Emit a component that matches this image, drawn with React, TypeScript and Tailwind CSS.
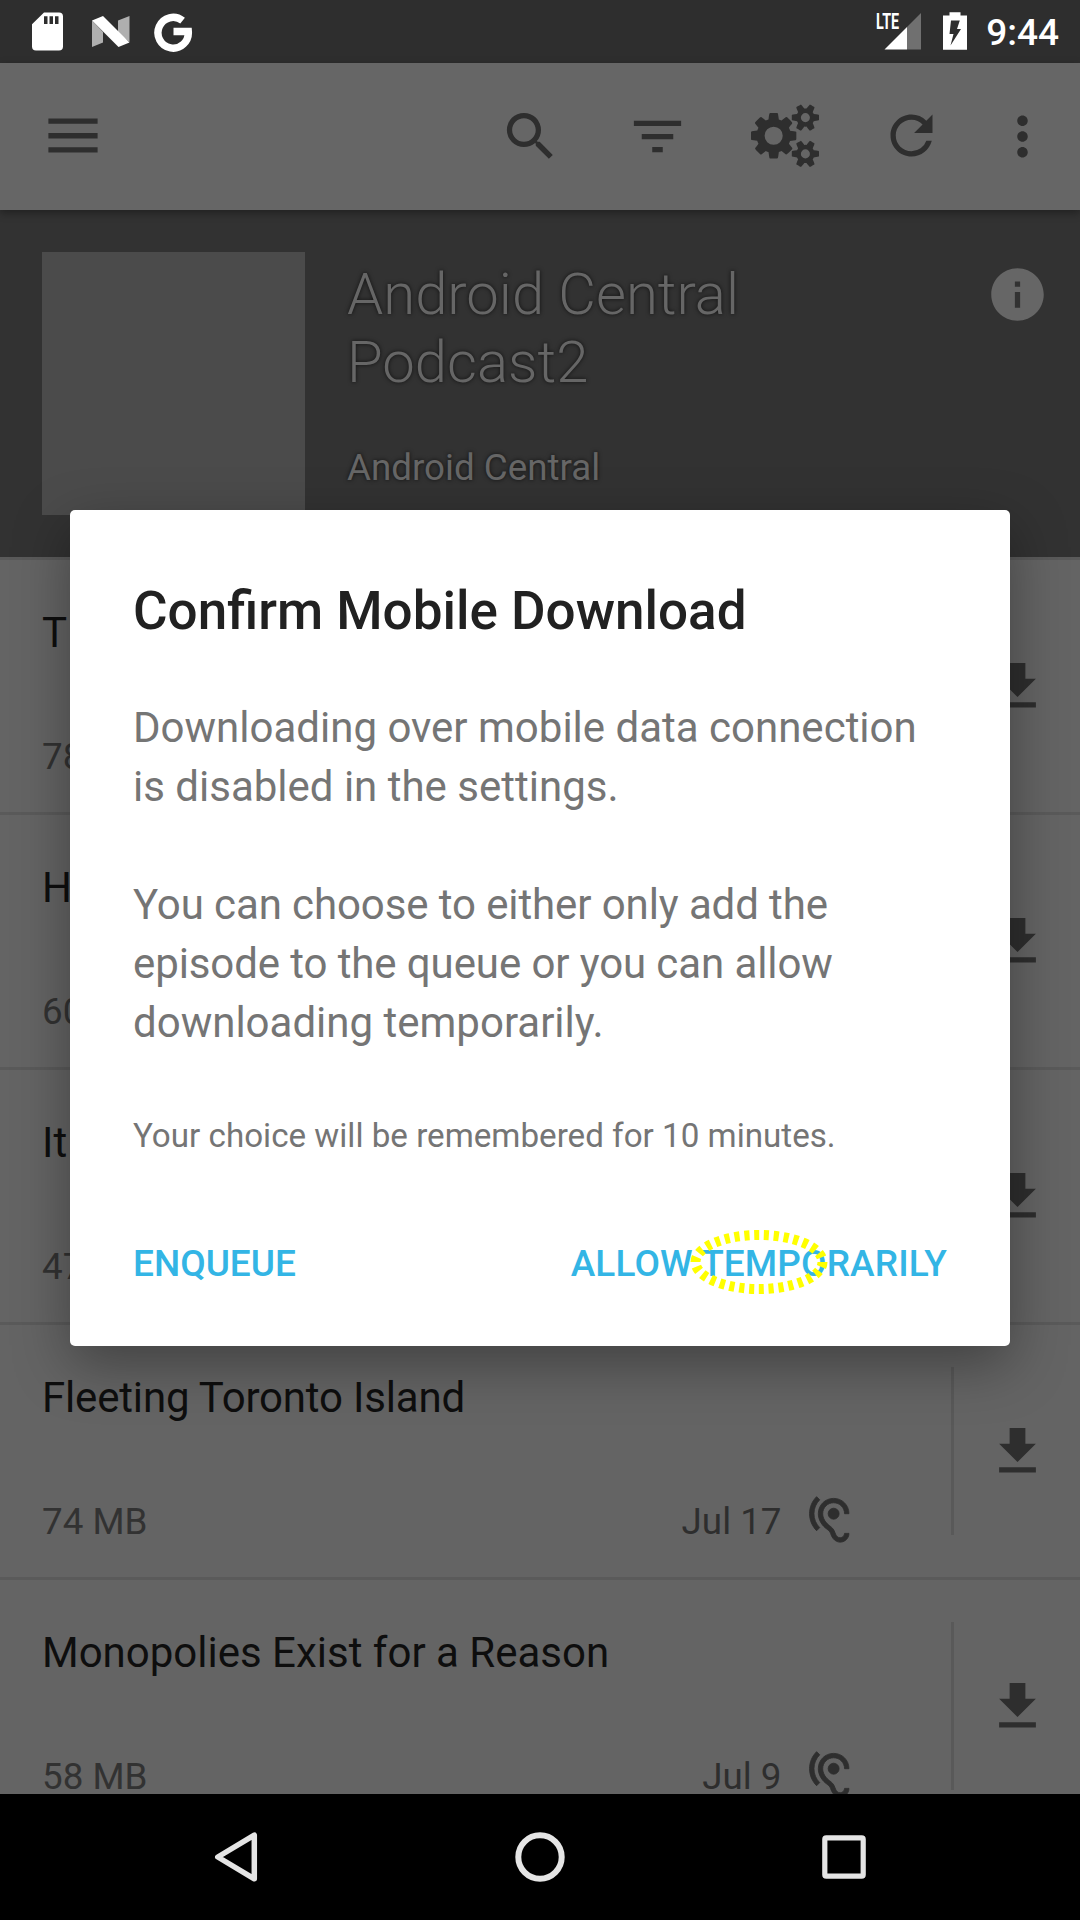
import React from "react";
import { MdSearch, MdFilterList, MdRefresh, MdMoreVert, MdInfo, MdHearing } from "react-icons/md";

const GEAR_LARGE =
  "M896 1024q0-106-75-181t-181-75-181 75-75 181 75 181 181 75 181-75 75-181zM1280 933v185q0 10-7 19.5t-16 10.5l-155 24q-11 35-32 76 34 48 90 115 7 11 7 20 0 12-7 19-23 30-82.5 89.5t-78.5 59.5q-11 0-21-7l-115-90q-37 19-77 31-11 108-23 155-7 24-30 24h-186q-11 0-20-7.5t-10-17.5l-23-153q-34-10-75-31l-118 89q-7 7-20 7-11 0-21-8-144-133-144-160 0-9 7-19 10-14 41-53t47-61q-23-44-35-82l-152-24q-10-1-17-9.5t-7-19.5v-185q0-10 7-19.5t16-10.5l155-24q11-35 32-76-34-48-90-115-7-11-7-20 0-12 7-20 22-30 82-89t79-59q11 0 21 7l115 90q34-18 77-32 11-108 23-154 7-24 30-24h186q11 0 20 7.5t10 17.5l23 153q34 10 75 31l118-89q8-7 20-7 11 0 21 8 144 133 144 160 0 8-7 19-12 16-42 54t-45 60q23 48 34 82l152 23q10 2 17 10.5t7 19.5z";
const GEAR_SMALL =
  "M1664 1536q0-52-38-90t-90-38-90 38-38 90q0 53 37.5 90.5t90.5 37.5 90.5-37.5 37.5-90.5zM1920 1466v140q0 16-149 31-12 27-30 52 51 113 51 138 0 4-4 7-122 71-124 71-8 0-46-47t-52-68q-20 2-30 2t-30-2q-14 21-52 68t-46 47q-2 0-124-71-4-3-4-7 0-25 51-138-18-25-30-52-149-15-149-31v-140q0-16 149-31 13-29 30-52-51-113-51-138 0-4 4-7 4-2 35-20t59-34 30-16q8 0 46 46.5t52 67.5q20-2 30-2t30 2q51-71 92-112l6-2q4 0 124 70 4 3 4 7 0 25-51 138 17 23 30 52 149 15 149 31z";

function StatusBar() {
  return (
    <div className="flex h-[63px] items-center justify-between bg-[#2e2e2e] pr-[21px] pl-[32px] text-white">
      <div className="flex items-center">
        <svg className="h-[63px] w-[31px]" viewBox="0 0 31 63" fill="currentColor">
          <path
            fillRule="evenodd"
            d="M12 12.5H27a4 4 0 0 1 4 4V46.500a4 4 0 0 1-4 4H4a4 4 0 0 1-4-4V24.300zM12 16.300V24h3.500V16.300zM17.500 16.300V24H21V16.300zM23 16.300V24h3.500V16.300z"
          />
        </svg>
        <svg className="ml-[29px] h-[63px] w-[38px]" viewBox="0 0 38 63" fill="currentColor">
          <path d="M0 20.500L11 32V42.500L0 47zM26 20.500L37.500 16V42L26 33z" fillOpacity=".62" />
          <path d="M0 20.500L11 16 37.500 42.500 26.500 47z" />
        </svg>
        <svg className="ml-[24px] h-[63px] w-[40px]" viewBox="0 0 40 63" fill="none" stroke="currentColor" strokeWidth="7.400">
          <path d="M28.600 20.700A15.200 15.400 0 1 0 34.300 31.500H19.500" />
        </svg>
      </div>
      <div className="flex items-center">
        <div className="relative h-[63px] w-[45px]">
          <span className="absolute top-[9px] left-0 origin-left scale-x-[.65] text-[22px] leading-[26px] font-bold">LTE</span>
          <svg className="absolute top-0 left-0 h-[63px] w-[45px]" viewBox="0 0 45 63">
            <path d="M31 27L45 13V49.500H31z" fill="#707070" />
            <path d="M8.500 49.500L31 27V49.500z" fill="#fff" />
          </svg>
        </div>
        <svg className="ml-[22px] h-[63px] w-[24px]" viewBox="0 0 24 63">
          <path d="M6.500 12.300H17.500V15.500H24V49.700H0V15.500H6.500z" fill="#fff" />
          <path d="M8 20.500H16.800L14 29h4L7.500 45.500 10.500 34H6.500z" fill="#2e2e2e" />
        </svg>
        <span className="mt-[2px] ml-[19px] text-[37px] leading-[44px] font-medium">9:44</span>
      </div>
    </div>
  );
}

function Toolbar() {
  return (
    <div className="relative z-10 flex h-[147px] items-center bg-[#666] pl-[48px] text-[#2e2e2e] shadow-[0_3px_8px_rgba(0,0,0,0.35)]">
      <svg className="mb-[2px] h-[36px] w-[50px]" viewBox="0 0 50 36" fill="currentColor">
        <path d="M.4.400h49.200v5.400H.4zM.4 15h49.200v5.400H.4zM.4 29.200h49.200v5.400H.4z" />
      </svg>
      <MdSearch className="ml-[401px] size-[63px]" />
      <MdFilterList className="ml-[64px] size-[63px]" />
      <svg className="mb-[1px] ml-[62px] h-[63.500px] w-[68px]" viewBox="0 128 1920 1792" fill="currentColor">
        <path d={GEAR_LARGE} />
        <path d={GEAR_SMALL} />
        <path d={GEAR_SMALL} transform="translate(0 -1024)" />
      </svg>
      <MdRefresh className="mb-[2px] ml-[61px] size-[63px]" />
      <MdMoreVert className="ml-[48px] size-[63px]" />
    </div>
  );
}

function PodcastHeader() {
  return (
    <div className="flex h-[347px] bg-[#323232] pt-[42px] pl-[42px] text-[#666] [text-shadow:0_0_4px_rgba(0,0,0,0.7)]">
      <div className="h-[263px] w-[263px] bg-[#4b4b4b]" />
      <div className="ml-[42px] w-[560px] pt-[8px]">
        <h1 className="w-[440px] text-[58px] leading-[68px] font-light">Android Central Podcast2</h1>
        <p className="mt-[50px] text-[36.750px] leading-[44px]">Android Central</p>
      </div>
      <MdInfo className="mt-[11px] ml-[79px] size-[63px]" />
    </div>
  );
}

const episodes = [
  { title: "T", size: "78 MB", date: "", tracking: "" },
  { title: "H", size: "60 MB", date: "", tracking: "" },
  { title: "It", size: "47 MB", date: "", tracking: "" },
  { title: "Fleeting Toronto Island", size: "74 MB", date: "Jul 17", tracking: "tracking-[-0.17px]" },
  { title: "Monopolies Exist for a Reason", size: "58 MB", date: "Jul 9", tracking: "" },
];

type Episode = (typeof episodes)[number];

function EpisodeRow({ title, size, date, tracking }: Episode) {
  return (
    <div className="flex h-[255px] shrink-0 border-t-[3px] border-[#5a5a5a] bg-[#646464] pl-[42px]">
      <div className="w-[811px] pt-[48px]">
        <p className={`text-[42px] leading-[50px] text-[#0e0e0e] ${tracking}`}>{title}</p>
        <div className="mt-[72px] flex items-start text-[36.750px] leading-[54px] text-[#323232]">
          <span>{size}</span>
          {date && (
            <>
              <span className="ml-auto text-[#2e2e2e]">{date}</span>
              <MdHearing className="mt-[-1px] mr-[-2px] ml-[21px] size-[52.500px] stroke-[0.4px] text-[#2e2e2e] [&>path:first-child]:stroke-none" />
            </>
          )}
        </div>
      </div>
      <div className="mt-[42px] ml-[98px] h-[168px] w-[3px] bg-[#595959]" />
      <svg className="mt-[95px] ml-[32px] size-[63px] text-[#2e2e2e]" viewBox="0 0 24 24" fill="currentColor">
        <path d="M19 9h-4V3H9v6H5l7 7 7-7zM5 18v2h14v-2H5z" />
      </svg>
    </div>
  );
}

function NavBar() {
  return (
    <div className="flex h-[126px] shrink-0 items-center justify-center gap-[220px] bg-black">
      <svg className="size-[84px]" viewBox="0 0 84 84" fill="none" stroke="#e5e5e5" strokeWidth="5.500" strokeLinejoin="round">
        <path d="M23.800 42L60.300 20.200V63.800z" />
      </svg>
      <svg className="size-[84px]" viewBox="0 0 84 84" fill="none" stroke="#e5e5e5" strokeWidth="6">
        <circle cx="42" cy="42" r="21.700" />
      </svg>
      <svg className="size-[84px]" viewBox="0 0 84 84" fill="none" stroke="#e5e5e5" strokeWidth="5.200">
        <rect x="22.800" y="22.800" width="38.400" height="38.400" rx="1.500" />
      </svg>
    </div>
  );
}

function ConfirmDialog() {
  return (
    <div className="absolute top-[510px] left-[70px] z-20 h-[836px] w-[940px] rounded-[5px] bg-white px-[63px] pt-[70px] text-[#757575] shadow-[0_18px_55px_rgba(0,0,0,0.35)]">
      <h2 className="text-[53px] leading-[62px] font-medium text-[#212121]">Confirm Mobile Download</h2>
      <div className="mt-[56px] flex flex-col gap-[59px] text-[42px] leading-[59px]">
        <p>
          Downloading over mobile data connection
          <br />
          is disabled in the settings.
        </p>
        <p>
          <span className="tracking-[-0.1px]">
            You can choose to either only add the
            <br />
            episode to the queue or you can allow
          </span>
          <br />
          downloading temporarily.
        </p>
      </div>
      <p className="mt-[64px] text-[33.180px] leading-[40px]">Your choice will be remembered for 10 minutes.</p>
      <div className="mt-[86px] flex justify-between text-[37px] leading-[44px] font-medium text-[#33b5e5]">
        <button>ENQUEUE</button>
        <button className="tracking-[0.12px]">ALLOW TEMPORARILY</button>
      </div>
      <svg className="absolute top-[715px] left-[615px] h-[74px] w-[148px]" viewBox="0 0 148 74" fill="none">
        <ellipse cx="74" cy="37" rx="63.500" ry="27" stroke="#ff0" strokeWidth="10" pathLength="300" strokeDasharray="5.200 4.800" />
      </svg>
    </div>
  );
}

export default function App() {
  return (
    <div className="relative flex h-[1920px] w-[1080px] flex-col overflow-hidden bg-[#646464] font-[Roboto,sans-serif]">
      <StatusBar />
      <Toolbar />
      <PodcastHeader />
      <div className="flex min-h-0 flex-1 flex-col overflow-hidden">
        {episodes.map((e) => (
          <EpisodeRow key={e.title} {...e} />
        ))}
      </div>
      <NavBar />
      <ConfirmDialog />
    </div>
  );
}
